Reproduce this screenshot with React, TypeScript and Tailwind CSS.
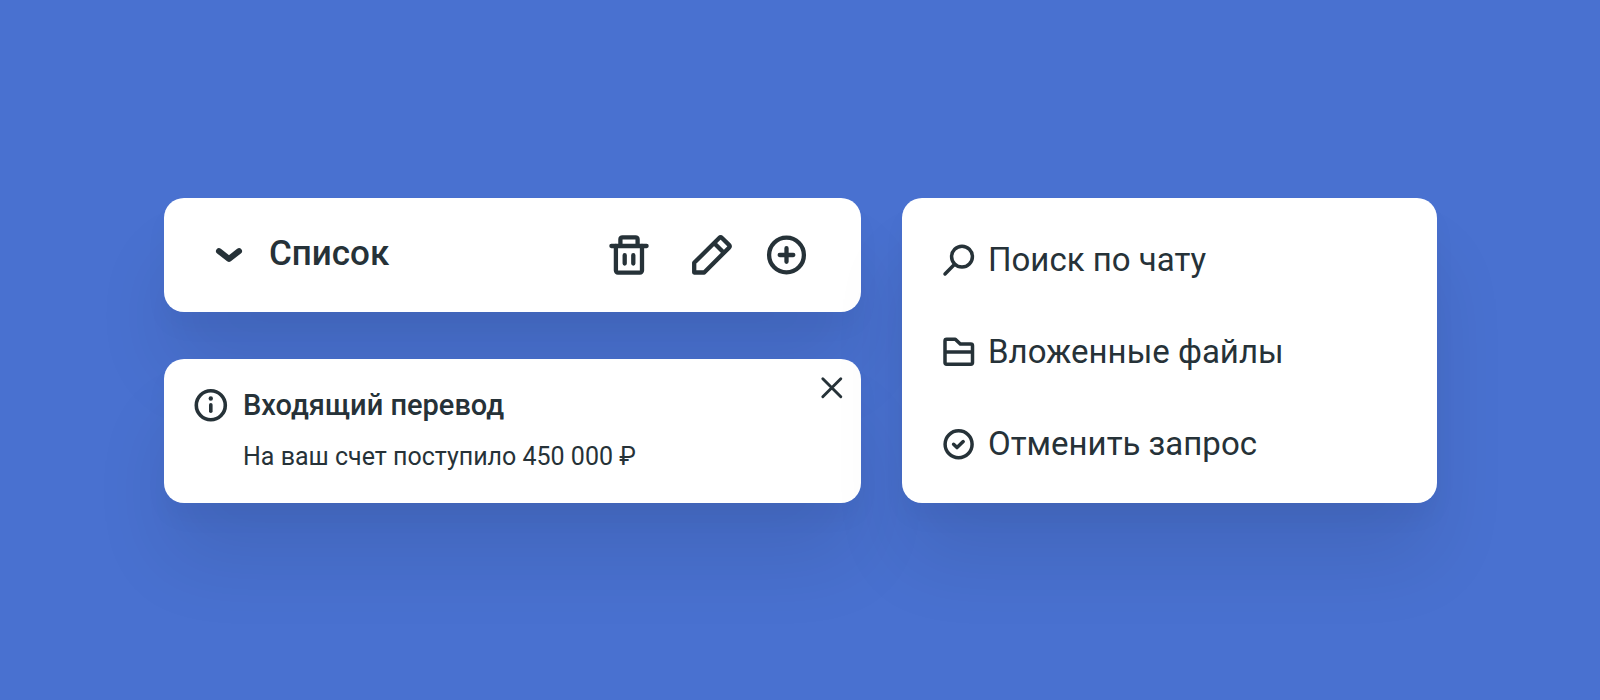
import type { ReactNode } from "react";

type IconProps = {
  size: number;
  stroke: number;
  children: ReactNode;
};

function Icon({ size, stroke, children }: IconProps) {
  return (
    <svg
      width={size}
      height={size}
      viewBox={`0 0 ${size} ${size}`}
      fill="none"
      stroke="currentColor"
      strokeWidth={stroke}
      strokeLinecap="round"
      strokeLinejoin="round"
      className="shrink-0"
      aria-hidden="true"
    >
      {children}
    </svg>
  );
}

const menuItems = [
  {
    label: "Поиск по чату",
    icon: (
      <>
        <circle cx="22" cy="15.7" r="10.4" />
        <path d="M14.6 23.3 5 32.9" />
      </>
    ),
  },
  {
    label: "Вложенные файлы",
    icon: (
      <path d="M5 7.9a1.7 1.7 0 0 1 1.7-1.7h8.6l5 4.9h10.5a1.7 1.7 0 0 1 1.7 1.7v16.8a1.7 1.7 0 0 1-1.7 1.7H6.7A1.7 1.7 0 0 1 5 29.6ZM5 19h27.5" />
    ),
  },
  {
    label: "Отменить запрос",
    icon: (
      <>
        <circle cx="18.6" cy="19.2" r="13.5" />
        <path d="m13.6 19.3 3.4 3.3 6.2-6" />
      </>
    ),
  },
];

function ListHeader() {
  return (
    <section className="flex h-[114px] items-center justify-between rounded-[20px] bg-white pr-[50px] pl-[45px] shadow-[0_16px_24px_rgba(0,0,0,0.03),0_60px_80px_-4px_rgba(0,0,0,0.09)]">
      <button type="button" className="flex items-center gap-[20px]">
        <Icon size={40} stroke={6}>
          <path d="m10 16.1 10 7.9 10-7.9" />
        </Icon>
        <span className="pb-[2px] text-[35px] leading-[40px] font-medium">Список</span>
      </button>

      <div className="flex items-center gap-[27px]">
        <button type="button" aria-label="Удалить" className="mr-2">
          <Icon size={48} stroke={4.3}>
            <path d="M6.4 15h35.2M15.4 15V8.3a2 2 0 0 1 2-2h13.2a2 2 0 0 1 2 2V15" />
            <path d="M10.9 15v24.6a2 2 0 0 0 2 2H35a2 2 0 0 0 2-2V15M19.7 24.2v8.4M28.3 24.2v8.4" />
          </Icon>
        </button>
        <button type="button" aria-label="Редактировать">
          <Icon size={48} stroke={4.3}>
            <path d="M6.2 41.5V31.8L31.2 7a2 2 0 0 1 2.8 0l7 6.9a2 2 0 0 1 0 2.8L16.2 41.5ZM26.3 12.2l9 9" />
          </Icon>
        </button>
        <button type="button" aria-label="Добавить">
          <Icon size={48} stroke={4.3}>
            <circle cx="23.5" cy="24" r="17.4" />
            <path d="M23.5 17.2v13.6M16.7 24h13.6" />
          </Icon>
        </button>
      </div>
    </section>
  );
}

function Notification() {
  return (
    <section
      role="status"
      className="flex items-start rounded-[20px] bg-white pt-[26px] pr-[9px] pb-[30px] pl-[27px] shadow-[0_16px_24px_rgba(0,0,0,0.03),0_60px_80px_-4px_rgba(0,0,0,0.09)]"
    >
      <Icon size={40} stroke={3.6}>
        <circle cx="19.8" cy="20.3" r="14.5" />
        <path d="M19.8 19.7v6.5" />
        <circle cx="19.8" cy="13.5" r="2.2" fill="currentColor" stroke="none" />
      </Icon>
      <div className="ml-3 flex-1">
        <h2 className="text-[29px] leading-[40px] font-medium">Входящий перевод</h2>
        <p className="mt-4 text-[25px] leading-[32px]">На ваш счет поступило 450 000 ₽</p>
      </div>
      <button type="button" aria-label="Закрыть" className="-mt-[17px]">
        <Icon size={40} stroke={2.9}>
          <path d="m10.8 10.8 18 18M28.8 10.8l-18 18" />
        </Icon>
      </button>
    </section>
  );
}

function ChatMenu() {
  return (
    <nav className="rounded-[20px] bg-white pt-[42px] pr-10 pb-[39px] pl-[38px] shadow-[0_16px_24px_rgba(0,0,0,0.03),0_60px_80px_-4px_rgba(0,0,0,0.09)]">
      <ul className="flex flex-col gap-[52px]">
        {menuItems.map((item) => (
          <li key={item.label}>
            <button type="button" className="flex w-full items-center gap-[10px] text-left">
              <Icon size={38} stroke={3.5}>
                {item.icon}
              </Icon>
              <span className="text-[33px] leading-[40px]">{item.label}</span>
            </button>
          </li>
        ))}
      </ul>
    </nav>
  );
}

export default function App() {
  return (
    <main className="flex min-h-screen items-center bg-[#4971d0] pr-[163px] pl-[164px] font-[Roboto,sans-serif] text-[#263238]">
      <div className="grid w-full grid-cols-[697fr_535fr] gap-[41px]">
        <div className="flex flex-col gap-[47px]">
          <ListHeader />
          <Notification />
        </div>
        <ChatMenu />
      </div>
    </main>
  );
}
